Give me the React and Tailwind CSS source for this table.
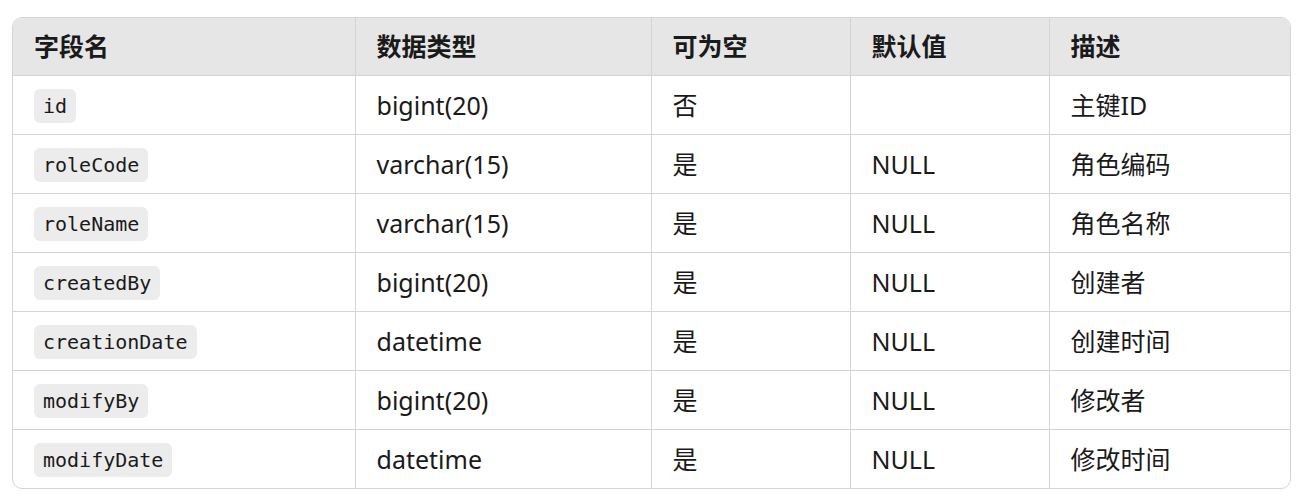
import React from "react";

const rows = [
  ["id", "bigint(20)", "否", "", "主键ID"],
  ["roleCode", "varchar(15)", "是", "NULL", "角色编码"],
  ["roleName", "varchar(15)", "是", "NULL", "角色名称"],
  ["createdBy", "bigint(20)", "是", "NULL", "创建者"],
  ["creationDate", "datetime", "是", "NULL", "创建时间"],
  ["modifyBy", "bigint(20)", "是", "NULL", "修改者"],
  ["modifyDate", "datetime", "是", "NULL", "修改时间"],
];

const heads = ["字段名", "数据类型", "可为空", "默认值", "描述"];
const widths = ["w-[342px]", "w-[296px]", "w-[199px]", "w-[199px]", "w-[243px]"];

export default function App() {
  return (
    <div className="w-[1299px] h-[503px] bg-white pt-[17px] px-[12px]">
      <div
        className="w-[1279px] border border-[#d4d4d4] rounded-[10px] overflow-hidden text-[#1a1a1a]"
        style={{ fontFamily: '"Noto Sans", "Noto Sans CJK SC", sans-serif' }}
      >
        <table className="w-full table-fixed border-collapse">
          <colgroup>
            {widths.map((w, i) => (
              <col key={i} className={w} />
            ))}
          </colgroup>
          <thead>
            <tr className="bg-[#e6e6e6] h-[57px]">
              {heads.map((h, i) => (
                <th
                  key={i}
                  className={`text-left font-bold text-[25px] leading-[32px] px-[21px] border-[#d4d4d4] ${i > 0 ? "border-l" : ""}`}
                >
                  {h}
                </th>
              ))}
            </tr>
          </thead>
          <tbody>
            {rows.map((r, ri) => (
              <tr key={ri} className="h-[59px] border-t border-[#d4d4d4]">
                {r.map((c, ci) => (
                  <td
                    key={ci}
                    className={`px-[21px] text-[25px] leading-[32px] align-middle border-[#d4d4d4] ${ci > 0 ? "border-l" : ""}`}
                  >
                    {ci === 0 ? (
                      <span
                        className="inline-block align-middle bg-[#ececec] rounded-[6px] px-[9px] py-[4px] text-[20px] leading-[26px]"
                        style={{ fontFamily: '"DejaVu Sans Mono", "Liberation Mono", monospace' }}
                      >
                        {c}
                      </span>
                    ) : (
                      c
                    )}
                  </td>
                ))}
              </tr>
            ))}
          </tbody>
        </table>
      </div>
    </div>
  );
}
